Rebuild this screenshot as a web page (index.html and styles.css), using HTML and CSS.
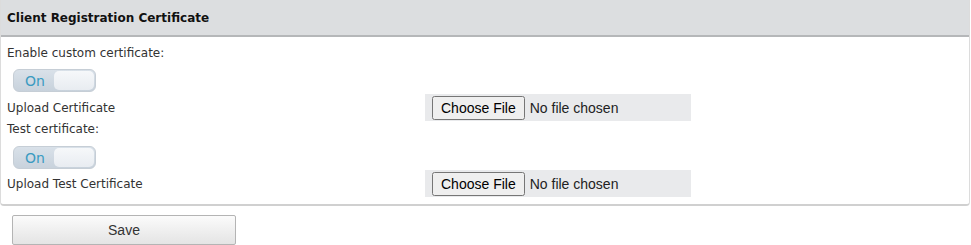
FILE: index.html
```html
<!DOCTYPE html>
<html>
<head>
<meta charset="utf-8">
<link rel="stylesheet" href="styles.css">
</head>
<body>
<div class="panel">
  <div class="panel-head">Client Registration Certificate</div>
  <div class="panel-body">
    <div class="label">Enable custom certificate:</div>
    <div class="toggle"><span class="toggle-on">On</span><span class="knob"></span></div>
    <div class="row">
      <div class="row-label">Upload Certificate</div>
      <div class="file-box"><input type="file" class="file"></div>
    </div>
    <div class="label">Test certificate:</div>
    <div class="toggle toggle-2"><span class="toggle-on">On</span><span class="knob"></span></div>
    <div class="row">
      <div class="row-label">Upload Test Certificate</div>
      <div class="file-box"><input type="file" class="file"></div>
    </div>
  </div>
</div>
<div class="actions">
  <button class="save">Save</button>
</div>
</body>
</html>
```
FILE: styles.css
```css
html, body {
  margin: 0;
  padding: 0;
  background: #ffffff;
}
body {
  font-family: "DejaVu Sans", Verdana, sans-serif;
  font-size: 12px;
  color: #333333;
  width: 971px;
}
.panel {
  width: 970px;
  border: 1px solid #dcdcdc;
  border-top: none;
  border-bottom: 2px solid #d0d0d0;
  border-radius: 0 0 4px 4px;
  box-sizing: border-box;
}
.panel-head {
  height: 35px;
  background: #dcdee0;
  border-bottom: 2px solid #b5b7b9;
  font-weight: bold;
  font-size: 12px;
  color: #111;
  padding-left: 6px;
  display: flex;
  align-items: center;
}
.panel-body {
  padding: 8px 0 7px 6px;
}
.label {
  line-height: 17px;
}
.toggle {
  margin: 7px 0 2px 6px;
  width: 83px;
  height: 23px;
  border-radius: 6px;
  background: linear-gradient(#d9e1e9, #c8d2dc);
  border: 1px solid #c6ced6;
  box-sizing: border-box;
  display: flex;
  align-items: center;
  position: relative;
}
.toggle-2 {
  margin-top: 8px;
  margin-bottom: 1px;
}
.toggle-on {
  color: #3a9bc1;
  font-size: 14px;
  font-family: "DejaVu Sans", Verdana, sans-serif;
  width: 42px;
  text-align: center;
}
.knob {
  position: absolute;
  right: 1px;
  top: 1px;
  width: 40px;
  height: 19px;
  border-radius: 5px;
  background: linear-gradient(#f6f8fa, #e8ecf1);
}
.row {
  display: flex;
  align-items: center;
  height: 27px;
}
.row-label {
  width: 418px;
}
.file-box {
  width: 266px;
  height: 27px;
  background: #e9eaec;
  display: flex;
  align-items: center;
  padding-left: 7px;
  box-sizing: border-box;
}
.file {
  font-family: "Liberation Sans", Arial, sans-serif;
  font-size: 14px;
  color: #222;
}
.file::file-selector-button {
  padding: 2px 7px;
  margin-right: 5px;
}
.actions {
  padding: 9px 0 0 12px;
}
.save {
  width: 224px;
  height: 30px;
  border: 1px solid #b4b4b4;
  border-radius: 2px;
  background: linear-gradient(#fbfbfb, #e4e4e4);
  font-family: "Liberation Sans", Arial, sans-serif;
  font-size: 14px;
  color: #333;
}
```
